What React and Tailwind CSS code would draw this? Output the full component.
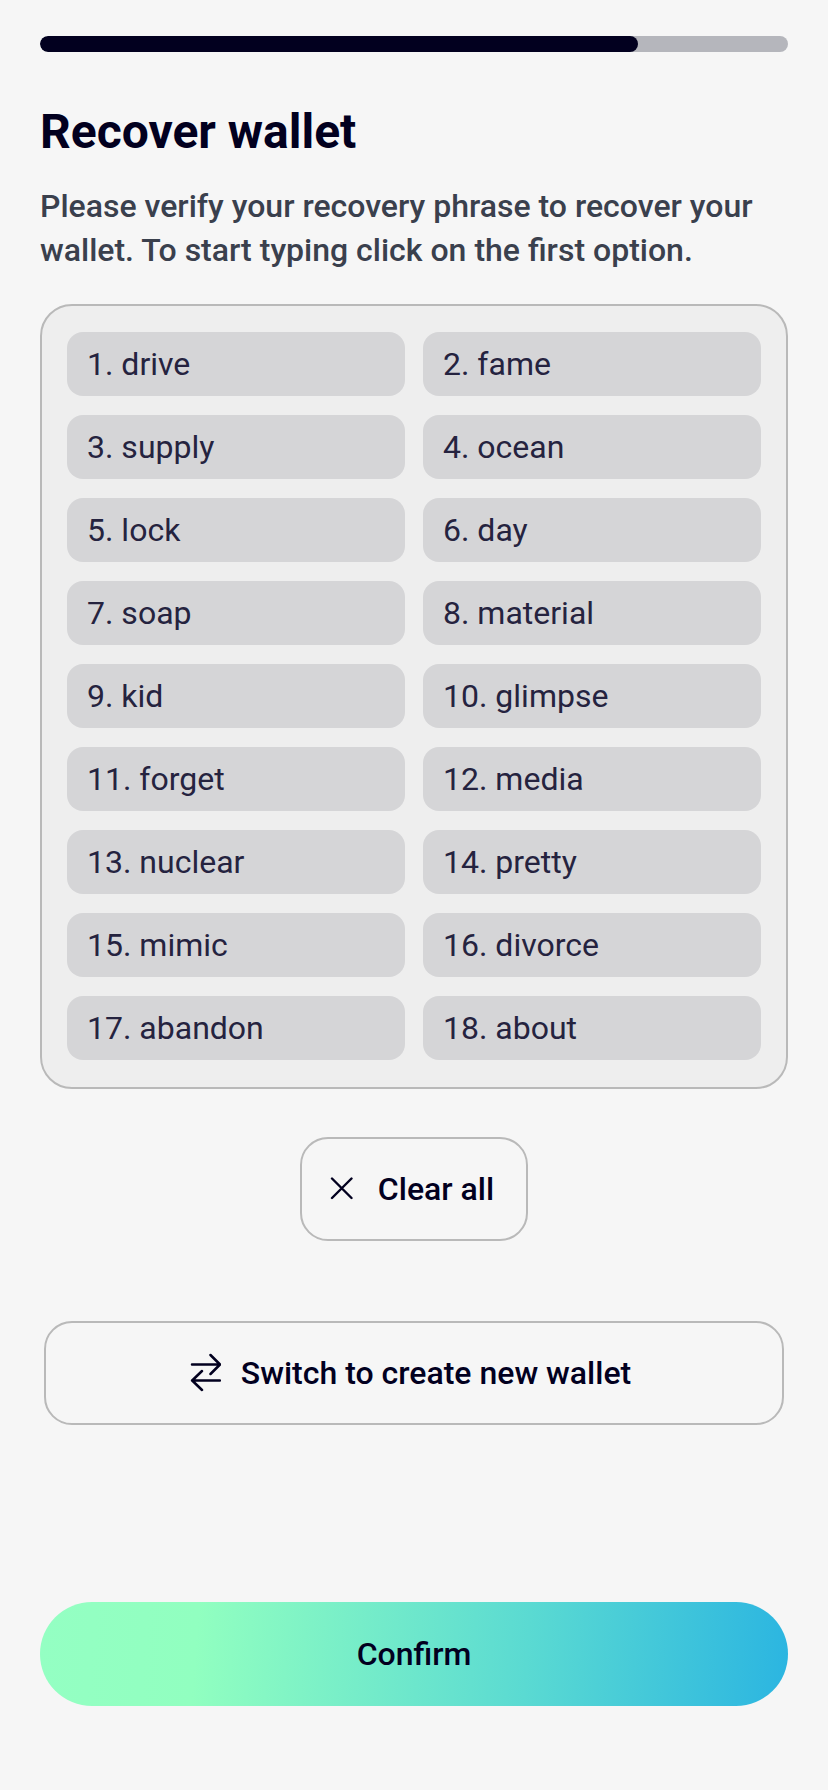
const words = [
  'drive', 'fame', 'supply', 'ocean', 'lock', 'day', 'soap', 'material', 'kid',
  'glimpse', 'forget', 'media', 'nuclear', 'pretty', 'mimic', 'divorce', 'abandon', 'about',
];

function ProgressBar({ value }) {
  return (
    <div
      role="progressbar"
      aria-label="Setup progress"
      aria-valuenow={value}
      aria-valuemin={0}
      aria-valuemax={100}
      className="h-4 overflow-hidden rounded-full bg-[#b5b6bc]"
    >
      <div className="h-full rounded-full bg-[#02001f]" style={{ width: `${value}%` }} />
    </div>
  );
}

function CloseIcon() {
  return (
    <svg width="24" height="24" viewBox="0 0 24 24" fill="none" stroke="currentColor" strokeWidth="2.4" strokeLinecap="round" aria-hidden="true">
      <path d="M2 1.5 21.5 21M21.5 1.5 2 21" />
    </svg>
  );
}

function SwitchIcon() {
  return (
    <svg width="32" height="40" viewBox="0 0 32 40" fill="none" stroke="currentColor" strokeWidth="2.5" strokeLinecap="round" strokeLinejoin="round" aria-hidden="true">
      <path d="M3 11.5H31M21.5 2 31 11.5 21.5 21" />
      <path d="M31 27.5H3M13 18 3.2 27.5 13 37" />
    </svg>
  );
}

export default function App() {
  return (
    <main className="flex min-h-screen flex-col bg-[#f6f6f6] px-10 pt-9 pb-[84px] font-['Roboto',sans-serif] text-[32px] leading-[44px] text-[#02001f]">
      <ProgressBar value={80} />
      <h1 className="mt-[52px] text-[48px] leading-[56px] font-bold">Recover wallet</h1>
      <p className="mt-6 font-medium text-[#3a404d]">
        Please verify your recovery phrase to recover your wallet. To start typing click on the first option.
      </p>
      <ol className="mt-8 grid grid-cols-2 gap-x-[18px] gap-y-[19px] rounded-[32px] border-2 border-[#b9b9b9] bg-[#eeeeee] px-[25px] pt-[26px] pb-[27px]">
        {words.map((word, i) => (
          <li key={word} className="flex h-16 items-center rounded-2xl bg-[#d5d5d7] px-5 text-[#25233f]">
            {i + 1}. {word}
          </li>
        ))}
      </ol>
      <button type="button" className="mt-12 flex h-[104px] items-center gap-6 self-center rounded-[28px] border-2 border-[#b9b9b9] pr-8 pl-7 font-medium">
        <CloseIcon />
        Clear all
      </button>
      <button type="button" className="mx-1 mt-20 flex h-[104px] items-center justify-center gap-5 rounded-[28px] border-2 border-[#b9b9b9] pr-2 font-medium">
        <SwitchIcon />
        Switch to create new wallet
      </button>
      <button type="button" className="mt-auto h-[104px] rounded-full bg-[linear-gradient(94deg,#94ffc3_0%,#91ffc0_21%,#5adad2_65%,#2bb5e1_100%)] font-medium">
        Confirm
      </button>
    </main>
  );
}
